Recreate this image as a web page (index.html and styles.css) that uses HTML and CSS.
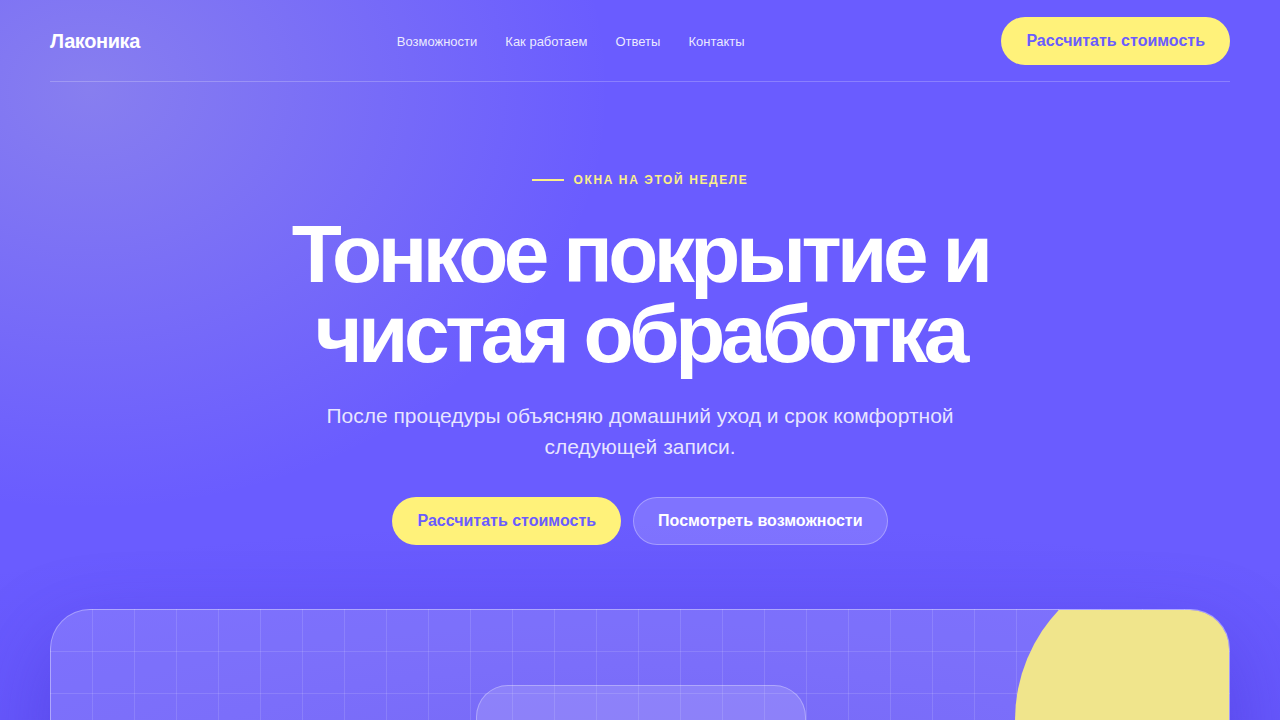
FILE: index.html
```html
<!DOCTYPE html>
<html lang="ru">
<head>
<meta charset="utf-8">
<title>Лаконика</title>
<link rel="stylesheet" href="styles.css">
</head>
<body>
<div class="page">
  <header class="header">
    <a class="logo" href="#">Лаконика</a>
    <nav class="nav">
      <a href="#">Возможности</a>
      <a href="#">Как работаем</a>
      <a href="#">Ответы</a>
      <a href="#">Контакты</a>
    </nav>
    <a class="btn btn-yellow" href="#">Рассчитать стоимость</a>
  </header>
  <section class="hero">
    <div class="eyebrow"><span class="eyebrow-line"></span>ОКНА НА ЭТОЙ НЕДЕЛЕ</div>
    <h1 class="title">Тонкое покрытие и<br>чистая обработка</h1>
    <p class="subtitle">После процедуры объясняю домашний уход и срок комфортной следующей записи.</p>
    <div class="actions">
      <a class="btn btn-yellow" href="#">Рассчитать стоимость</a>
      <a class="btn btn-ghost" href="#">Посмотреть возможности</a>
    </div>
  </section>
  <div class="showcase">
    <div class="blob"></div>
    <div class="inner-card"></div>
  </div>
</div>
</body>
</html>
```
FILE: styles.css
```css
* { box-sizing: border-box; }
html, body { margin: 0; padding: 0; }
body {
  font-family: "Liberation Sans", Arial, sans-serif;
  color: #fff;
  background:
    radial-gradient(ellipse 520px 420px at 90px 90px, rgba(190,190,210,0.35), rgba(190,190,210,0) 100%),
    radial-gradient(ellipse 1100px 260px at 640px 780px, rgba(70,50,220,0.3), rgba(70,50,220,0) 100%),
    #6a5cff;
  min-height: 720px;
  overflow: hidden;
}
a { text-decoration: none; color: inherit; }
.page { width: 1180px; margin: 0 auto; }
.header {
  display: flex;
  align-items: center;
  justify-content: space-between;
  padding: 17px 0 16px;
  border-bottom: 1px solid rgba(255,255,255,0.22);
}
.logo { font-size: 20px; font-weight: 700; letter-spacing: -0.4px; }
.nav { display: flex; gap: 28px; font-size: 13px; color: rgba(255,255,255,0.88); }
.btn {
  display: inline-flex;
  align-items: center;
  justify-content: center;
  height: 48px;
  padding: 0 25px;
  border-radius: 24px;
  font-size: 16px;
  font-weight: 700;
}
.btn-yellow { background: #fff27a; color: #6a5cff; }
.btn-ghost {
  padding: 0 24px;
  background: rgba(255,255,255,0.14);
  border: 1px solid rgba(255,255,255,0.3);
  color: #fff;
}
.hero {
  display: flex;
  flex-direction: column;
  align-items: center;
  text-align: center;
  padding-top: 90px;
}
.eyebrow {
  display: flex;
  align-items: center;
  gap: 10px;
  height: 16px;
  font-size: 12px;
  font-weight: 700;
  letter-spacing: 1.6px;
  color: #fbef8a;
}
.eyebrow-line { width: 32px; height: 2px; background: #fbef8a; }
.title {
  margin: 26px 0 0;
  font-size: 82px;
  line-height: 80px;
  font-weight: 700;
  letter-spacing: -4.5px;
}
.subtitle {
  margin: 26px 0 0;
  width: 660px;
  font-size: 21px;
  line-height: 31px;
  color: rgba(255,255,255,0.85);
}
.actions { display: flex; gap: 12px; margin-top: 35px; }
.showcase {
  position: relative;
  margin-top: 64px;
  height: 400px;
  border-radius: 40px;
  border: 1px solid rgba(255,255,255,0.3);
  overflow: hidden;
  background-color: rgba(255,255,255,0.15);
  background-image:
    linear-gradient(rgba(255,255,255,0.12) 1px, transparent 1px),
    linear-gradient(90deg, rgba(255,255,255,0.12) 1px, transparent 1px);
  background-size: 42px 42px;
  background-position: -1px -1px;
  box-shadow: 0 30px 80px rgba(60,40,200,0.35);
}
.blob {
  position: absolute;
  left: 964px;
  top: -50px;
  width: 320px;
  height: 320px;
  border-radius: 50%;
  background: #f0e58c;
}
.inner-card {
  position: absolute;
  left: 425px;
  top: 75px;
  width: 330px;
  height: 200px;
  border-radius: 32px;
  background: rgba(255,255,255,0.15);
  border: 1px solid rgba(255,255,255,0.3);
}
```
